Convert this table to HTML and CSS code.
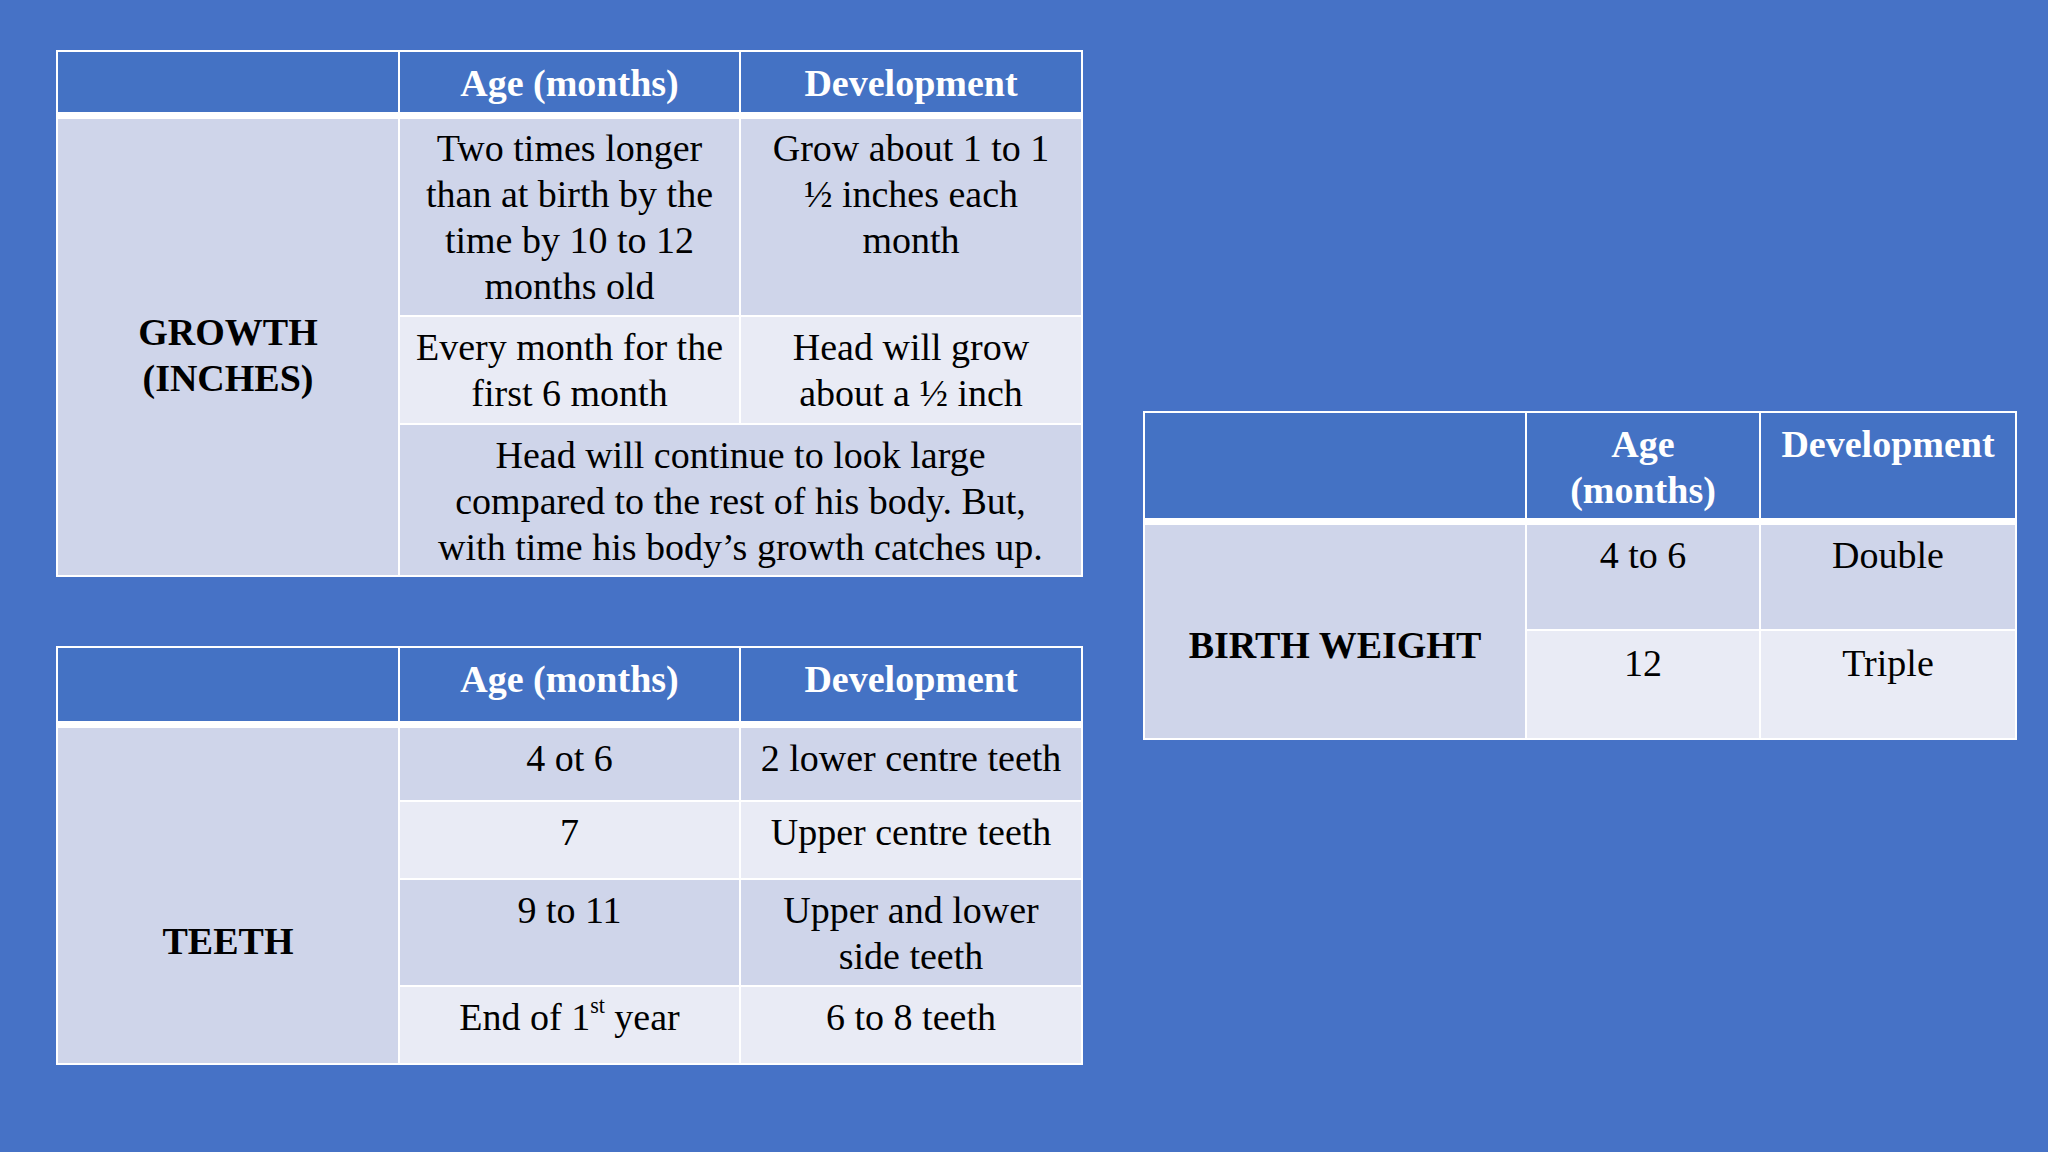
FILE: index.html
```html
<!DOCTYPE html>
<html lang="en">
<head>
<meta charset="utf-8">
<title>Growth and Development</title>
<link rel="stylesheet" href="styles.css">
</head>
<body>
<main class="slide">
  <div class="left-col">
    <section class="tbl tbl-growth">
      <div class="cell head"></div>
      <div class="cell head">Age (months)</div>
      <div class="cell head">Development</div>
      <div class="cell label label-growth">GROWTH<br>(INCHES)</div>
      <div class="cell dark p6">Two times longer<br>than at birth by the<br>time by 10 to 12<br>months old</div>
      <div class="cell dark p6">Grow about 1 to 1<br>½ inches each<br>month</div>
      <div class="cell light">Every month for the<br>first 6 month</div>
      <div class="cell light">Head will grow<br>about a ½ inch</div>
      <div class="cell dark span2">Head will continue to look large<br>compared to the rest of his body. But,<br>with time his body’s growth catches up.</div>
    </section>

    <section class="tbl tbl-teeth">
      <div class="cell head"></div>
      <div class="cell head">Age (months)</div>
      <div class="cell head">Development</div>
      <div class="cell label label-teeth">TEETH</div>
      <div class="cell dark">4 ot 6</div>
      <div class="cell dark">2 lower centre teeth</div>
      <div class="cell light">7</div>
      <div class="cell light">Upper centre teeth</div>
      <div class="cell dark">9 to 11</div>
      <div class="cell dark">Upper and lower<br>side teeth</div>
      <div class="cell light">End of 1<sup>st</sup> year</div>
      <div class="cell light">6 to 8 teeth</div>
    </section>
  </div>

  <section class="tbl tbl-weight">
    <div class="cell head"></div>
    <div class="cell head">Age<br>(months)</div>
    <div class="cell head">Development</div>
    <div class="cell label label-weight">BIRTH WEIGHT</div>
    <div class="cell dark">4 to 6</div>
    <div class="cell dark">Double</div>
    <div class="cell light p9">12</div>
    <div class="cell light p9">Triple</div>
  </section>
</main>
</body>
</html>
```

FILE: styles.css
```css
html, body {
  margin: 0;
  padding: 0;
}

body {
  background: #4672c6;
  width: 2048px;
  height: 1152px;
  overflow: hidden;
  font-family: "Liberation Serif", "Times New Roman", serif;
  color: #000;
}

.slide {
  display: flex;
  align-items: flex-start;
}

.left-col {
  display: flex;
  flex-direction: column;
  gap: 69px;
  padding: 50px 0 0 56px;
}

.tbl {
  display: grid;
  gap: 2px;
  padding: 2px;
  background: #ffffff;
}

/* header track heights include the 5px thick white separator */
.tbl-growth {
  grid-template-columns: 340px 339px 340px;
  grid-template-rows: 65px 196px 106px 150px;
}

.tbl-teeth {
  grid-template-columns: 340px 339px 340px;
  grid-template-rows: 78px 72px 76px 105px 76px;
}

.tbl-weight {
  margin: 411px 0 0 60px;
  grid-template-columns: 380px 232px 254px;
  grid-template-rows: 110px 104px 107px;
}

.cell {
  font-size: 38px;
  line-height: 46px;
  text-align: center;
  white-space: nowrap;
  padding: 7px 4px 0;
  box-sizing: border-box;
}

.head {
  background: #4472c4;
  color: #ffffff;
  font-weight: bold;
  padding-top: 8px;
  margin-bottom: 5px;
}

.dark {
  background: #cfd5ea;
}

.light {
  background: #e9ebf5;
}

.p6 {
  padding-top: 6px;
}

.p9 {
  padding-top: 9px;
}

.span2 {
  grid-column: 2 / 4;
}

.label {
  background: #cfd5ea;
  font-weight: bold;
  grid-column: 1;
  display: flex;
  align-items: center;
  justify-content: center;
  padding: 0 4px;
}

.tbl-growth .label {
  grid-row: 2 / 5;
  padding-top: 15px;
}

.tbl-teeth .label {
  grid-row: 2 / 6;
  padding-top: 90px;
}

.tbl-weight .label {
  grid-row: 2 / 4;
  padding-top: 26px;
}

sup {
  font-size: 0.58em;
  line-height: 0;
  vertical-align: 0.75em;
}
```
